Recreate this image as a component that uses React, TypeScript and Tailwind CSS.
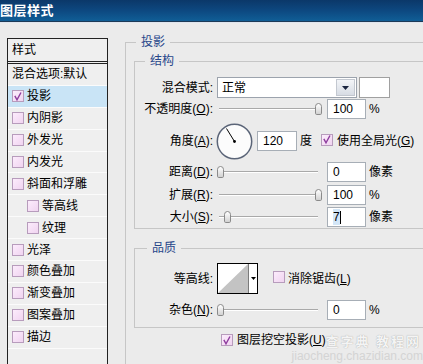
import React from "react";

function Check({ checked }: { checked?: boolean }) {
  return (
    <span className="inline-flex h-[12px] w-[12px] shrink-0 items-center justify-center border border-[#b79cbc] bg-gradient-to-br from-[#fcecfc] to-[#f0d4f0]">
      {checked && (
        <svg viewBox="0 0 12 12" className="h-[11px] w-[11px]">
          <path d="M2.2 5.2 L4.8 10 L9.6 1.2" fill="none" stroke="#8e3d9e" strokeWidth="1.7" />
        </svg>
      )}
    </span>
  );
}

function Lbl({ zh, k }: { zh: string; k?: string }) {
  return (
    <span>
      {zh}
      {k && (
        <>
          (<span className="underline underline-offset-[1px]">{k}</span>)
        </>
      )}
      :
    </span>
  );
}

function Slider({ thumb }: { thumb: string }) {
  return (
    <div className="relative h-[14px] w-[106px] shrink-0">
      <div className="absolute left-[2px] top-[6px] h-[2px] w-[99px] border-t border-[#a9a9a9] bg-white" />
      <div
        className={
          "absolute top-[1px] h-[12px] w-[7px] rounded-t-[4px] rounded-b-[2px] border border-[#8a8a8a] bg-gradient-to-b from-white to-[#d2d2d2] " +
          thumb
        }
      />
    </div>
  );
}

function Box({ v, w }: { v: React.ReactNode; w: string }) {
  return (
    <div className={"flex h-[20px] shrink-0 items-center border border-[#a7aeb6] bg-white pl-[5px] text-[12px] " + w}>
      {v}
    </div>
  );
}

const rows: { t: string; c?: boolean; ind?: boolean; sel?: boolean; noBox?: boolean }[] = [
  { t: "混合选项:默认", noBox: true },
  { t: "投影", c: true, sel: true },
  { t: "内阴影" },
  { t: "外发光" },
  { t: "内发光" },
  { t: "斜面和浮雕" },
  { t: "等高线", ind: true },
  { t: "纹理", ind: true },
  { t: "光泽" },
  { t: "颜色叠加" },
  { t: "渐变叠加" },
  { t: "图案叠加" },
  { t: "描边" },
];

export default function App() {
  return (
    <div className="relative h-[364px] w-[423px] overflow-hidden bg-[#ebebeb] font-['Liberation_Sans','Noto_Sans_CJK_SC',sans-serif] text-[12px] leading-[16px] text-black">
      {/* title bar */}
      <div className="flex h-[21px] items-center bg-gradient-to-b from-[#0b3869] via-[#0d4880] to-[#105e96]">
        <span className="text-[13px] font-bold tracking-[0.5px] text-white">图层样式</span>
      </div>
      <div className="h-[1px] bg-[#1d3a56]" />
      <div className="h-[1px] bg-[#dfe5ee]" />

      <div className="flex items-start">
        {/* left list */}
        <div className="ml-[7px] mt-[15px] h-[340px] w-[101px] shrink-0 border border-[#222] bg-[#efefef]">
          <div className="flex h-[22px] items-center pl-[4px]">样式</div>
          <div className="h-[3px] border-y border-[#222]" />
          {rows.map((r) => (
            <div
              key={r.t}
              className={
                "flex h-[21.9px] items-center border-b border-[#fbfbfb] " +
                (r.sel ? "bg-[#c9e4f6] " : "") +
                (r.ind ? "pl-[19px]" : "pl-[4px]")
              }
            >
              {!r.noBox && <Check checked={r.c} />}
              <span className={r.noBox ? "" : "ml-[3px]"}>{r.t}</span>
            </div>
          ))}
        </div>

        {/* right */}
        <fieldset className="ml-[17px] mt-[11px] h-[340px] w-[320px] shrink-0 border border-[#c6c6c6] p-0">
          <legend className="ml-[10px] px-[5px] leading-[16px] text-[#27468a]">投影</legend>
          <div className="pl-[8px] pt-[3px]">
            {/* 结构 */}
            <fieldset className="w-[300px] border border-[#c6c6c6] p-0">
              <legend className="ml-[10px] px-[5px] leading-[16px] text-[#27468a]">结构</legend>
              <div className="flex flex-col pb-[1px] pt-[8px]">
                <div className="flex h-[21px] items-center">
                  <div className="w-[78px] text-right">
                    <Lbl zh="混合模式" />
                  </div>
                  <div className="ml-[4px] flex h-[21px] w-[140px] items-center justify-between border border-[#9ca3ad] bg-white pl-[4px]">
                    <span>正常</span>
                    <div className="mr-[1px] flex h-[17px] w-[19px] items-center justify-center border border-[#c3c8d0] bg-gradient-to-b from-[#f3f5f8] to-[#d7dce4]">
                      <svg width="7" height="4" viewBox="0 0 7 4">
                        <path d="M0 0 H7 L3.5 4 Z" fill="#1a2540" />
                      </svg>
                    </div>
                  </div>
                  <div className="ml-[2px] h-[21px] w-[31px] border border-[#a0a0a0] bg-white" />
                </div>
                <div className="mt-[1px] flex h-[20px] items-center">
                  <div className="w-[78px] text-right">
                    <Lbl zh="不透明度" k="O" />
                  </div>
                  <div className="ml-[4px]">
                    <Slider thumb="left-[98px]" />
                  </div>
                  <div className="ml-[4px]">
                    <Box v="100" w="w-[39px]" />
                  </div>
                  <span className="ml-[3px]">%</span>
                </div>
                <div className="mt-[4px] flex h-[36px] items-center">
                  <div className="w-[78px] text-right">
                    <Lbl zh="角度" k="A" />
                  </div>
                  <svg width="37" height="37" viewBox="0 0 37 37" className="ml-[3px] shrink-0">
                    <circle cx="18.5" cy="18.5" r="17.2" fill="#fcfcfc" stroke="#5b6578" strokeWidth="1.5" />
                    <line x1="18.5" y1="18.5" x2="10.5" y2="5.5" stroke="#000" strokeWidth="1" />
                    <circle cx="18.5" cy="18.5" r="1.4" fill="#000" />
                  </svg>
                  <div className="ml-[4px]">
                    <Box v="120" w="w-[40px]" />
                  </div>
                  <span className="ml-[3px]">度</span>
                  <span className="ml-[9px]">
                    <Check checked />
                  </span>
                  <span className="ml-[4px]">
                    使用全局光(<span className="underline underline-offset-[1px]">G</span>)
                  </span>
                </div>
                <div className="mt-[3px] flex h-[20px] items-center">
                  <div className="w-[78px] text-right">
                    <Lbl zh="距离" k="D" />
                  </div>
                  <div className="ml-[4px]">
                    <Slider thumb="left-[0px]" />
                  </div>
                  <div className="ml-[4px]">
                    <Box v="0" w="w-[39px]" />
                  </div>
                  <span className="ml-[3px]">像素</span>
                </div>
                <div className="mt-[3px] flex h-[20px] items-center">
                  <div className="w-[78px] text-right">
                    <Lbl zh="扩展" k="R" />
                  </div>
                  <div className="ml-[4px]">
                    <Slider thumb="left-[98px]" />
                  </div>
                  <div className="ml-[4px]">
                    <Box v="100" w="w-[39px]" />
                  </div>
                  <span className="ml-[3px]">%</span>
                </div>
                <div className="mt-[2px] flex h-[20px] items-center">
                  <div className="w-[78px] text-right">
                    <Lbl zh="大小" k="S" />
                  </div>
                  <div className="ml-[4px]">
                    <Slider thumb="left-[7px]" />
                  </div>
                  <div className="ml-[4px]">
                    <Box
                      v={
                        <span className="flex items-center">
                          <span className="bg-[#d3e6f7]">7</span>
                          <span className="h-[13px] w-[1px] bg-black" />
                        </span>
                      }
                      w="w-[39px]"
                    />
                  </div>
                  <span className="ml-[3px]">像素</span>
                </div>
              </div>
            </fieldset>

            {/* 品质 */}
            <fieldset className="mt-[11px] w-[300px] border border-[#c6c6c6] p-0">
              <legend className="ml-[12px] px-[5px] leading-[16px] text-[#27468a]">品质</legend>
              <div className="flex flex-col pb-[7px] pt-[7px]">
                <div className="flex h-[31px] items-center">
                  <div className="w-[78px] text-right">
                    <Lbl zh="等高线" />
                  </div>
                  <div className="ml-[4px] flex h-[31px] w-[41px] border border-black bg-white">
                    <svg width="30" height="29" viewBox="0 0 30 29" className="shrink-0">
                      <path d="M0 29 L30 0 L30 29 Z" fill="#c3c3c3" />
                    </svg>
                    <div className="flex w-[9px] items-center justify-center border-l border-[#7a7a7a]">
                      <svg width="5" height="3" viewBox="0 0 5 3">
                        <path d="M0 0 H5 L2.5 3 Z" fill="#000" />
                      </svg>
                    </div>
                  </div>
                  <span className="ml-[15px]">
                    <Check />
                  </span>
                  <span className="ml-[3px]">
                    消除锯齿(<span className="underline underline-offset-[1px]">L</span>)
                  </span>
                </div>
                <div className="mt-[6px] flex h-[20px] items-center">
                  <div className="w-[78px] text-right">
                    <Lbl zh="杂色" k="N" />
                  </div>
                  <div className="ml-[4px]">
                    <Slider thumb="left-[0px]" />
                  </div>
                  <div className="ml-[4px]">
                    <Box v="0" w="w-[39px]" />
                  </div>
                  <span className="ml-[3px]">%</span>
                </div>
              </div>
            </fieldset>

            <div className="mt-[5px] flex h-[14px] items-center pl-[87px]">
              <Check checked />
              <span className="ml-[4px]">
                图层挖空投影(<span className="underline underline-offset-[1px]">U</span>)
              </span>
            </div>
          </div>
        </fieldset>
      </div>

      {/* watermark */}
      <div className="absolute bottom-[15px] right-[2px] text-[13px] font-bold leading-[15px] tracking-[2px] text-[#f4f4f4] [text-shadow:0_0_1px_#9a9a9a]">
        查字典 教程网
      </div>
      <div className="absolute bottom-[1px] right-[0px] text-[12px] leading-[13px] text-[#d4d4d4]">
        jiaocheng.chazidian.com
      </div>
    </div>
  );
}
